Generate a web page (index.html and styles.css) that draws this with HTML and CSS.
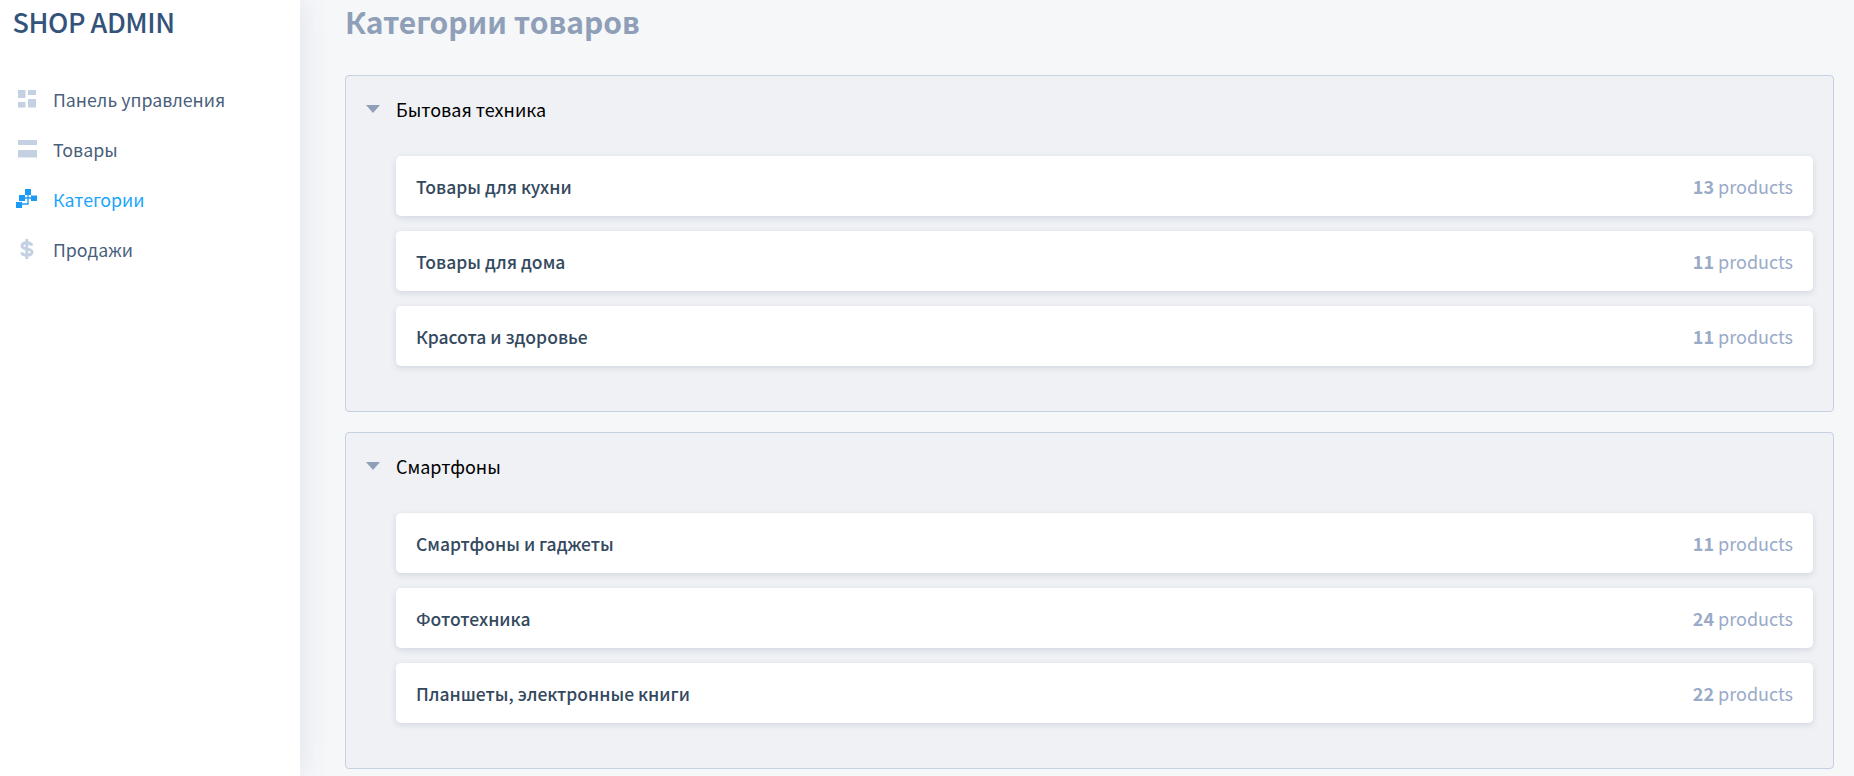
FILE: index.html
```html
<!DOCTYPE html>
<html lang="ru">
<head>
<meta charset="utf-8">
<title>Shop Admin</title>
<link rel="stylesheet" href="styles.css">
</head>
<body>
<div class="app">
  <aside class="sidebar">
    <div class="logo">SHOP ADMIN</div>
    <nav class="nav">
      <a class="nav-item">
        <svg class="nav-icon" viewBox="0 0 22 22"><path d="M2 2h7.500v8H2zM2 14h7.500v5.500H2zM12 2h8v5h-8zM12 11h8v8.500h-8z"/></svg>
        <span>Панель управления</span>
      </a>
      <a class="nav-item">
        <svg class="nav-icon" viewBox="0 0 22 22"><path d="M2 2h19v5H2zM2 12h19v7.500H2z"/></svg>
        <span>Товары</span>
      </a>
      <a class="nav-item active">
        <svg class="nav-icon" viewBox="0 0 22 22"><path d="M9 1h6v6H9zM3 7h6v6H3zM15 7.500h6V13h-6zM0 14h6v6H0z"/><path class="link" d="M9 10h6M12 7v9H6"/></svg>
        <span>Категории</span>
      </a>
      <a class="nav-item">
        <svg class="nav-icon" viewBox="0 0 22 22"><path class="dollar" d="M15.800 7.600C15.300 5.500 13.400 4.700 10.800 4.700 8 4.700 6 6 6 8c0 4.300 10 1.700 10 6.100 0 2-2.100 3.200-5.200 3.200-2.700 0-4.700-.9-5.200-3M10.800 1v20"/></svg>
        <span>Продажи</span>
      </a>
    </nav>
  </aside>
  <main class="main">
    <h1 class="title">Категории товаров</h1>
    <section class="group">
      <header class="group-head"><i class="caret"></i><span>Бытовая техника</span></header>
      <ul class="list">
        <li class="row"><span class="name">Товары для кухни</span><span class="count"><b>13</b> products</span></li>
        <li class="row"><span class="name">Товары для дома</span><span class="count"><b>11</b> products</span></li>
        <li class="row"><span class="name">Красота и здоровье</span><span class="count"><b>11</b> products</span></li>
      </ul>
    </section>
    <section class="group">
      <header class="group-head"><i class="caret"></i><span>Смартфоны</span></header>
      <ul class="list">
        <li class="row"><span class="name">Смартфоны и гаджеты</span><span class="count"><b>11</b> products</span></li>
        <li class="row"><span class="name">Фототехника</span><span class="count"><b>24</b> products</span></li>
        <li class="row"><span class="name">Планшеты, электронные книги</span><span class="count"><b>22</b> products</span></li>
      </ul>
    </section>
  </main>
</div>
</body>
</html>
```
FILE: styles.css
```css
* { box-sizing: border-box; }
html, body { margin: 0; height: 100%; overflow: hidden; }
body {
  font-family: "Noto Sans CJK SC", "Noto Sans", sans-serif;
  background: #f5f7f9;
  color: #34495e;
}
.app { display: flex; height: 776px; overflow: hidden; }
.sidebar {
  width: 300px;
  flex: none;
  background: #fff;
  box-shadow: 0 0 30px rgba(64, 80, 110, .12);
  padding: 4px 0 0 12.500px;
  position: relative;
}
.logo { font-size: 27px; line-height: 36px; font-weight: 500; color: #34537a; letter-spacing: -.45px; }
.nav { margin-top: 34px; display: flex; flex-direction: column; }
.nav-item { display: flex; align-items: center; height: 50px; gap: 15px; font-size: 17.800px; color: #4a5f7c; padding-left: 3.500px; }
.nav-item.active { color: #18a5fb; }
.nav-icon { width: 22px; height: 22px; fill: #c3d1e3; flex: none; }
.active .nav-icon { fill: #1a9bf5; }
.link { fill: none; stroke: #1a9bf5; stroke-width: 1.300; }
.dollar { fill: none; stroke: #c3d1e3; stroke-width: 3; }
.main { flex: 1; padding: 0 20px 0 45px; min-width: 0; }
.title { margin: 0 0 32px; font-size: 30px; line-height: 43px; font-weight: 700; color: #8f9fb8; }
.group {
  background: #eff1f5;
  border: 1px solid #c3d1e3;
  border-radius: 4px;
  height: 337px;
  margin-bottom: 20px;
  padding: 0 20px 0 50px;
  position: relative;
}
.group-head { display: flex; align-items: center; height: 65px; margin-bottom: 15px; font-size: 18px; color: #000; margin-left: -30px; gap: 16px; }
.caret { width: 0; height: 0; border: 7.500px solid transparent; border-top: 8px solid #8f9fb8; border-bottom: 0; flex: none; }
.list { list-style: none; margin: 0; padding: 0; display: flex; flex-direction: column; gap: 15px; }
.row {
  height: 60px;
  background: #fff;
  border-radius: 5px;
  box-shadow: 0 2px 6px rgba(60, 80, 110, .16);
  display: flex;
  align-items: center;
  justify-content: space-between;
  padding: 0 20px;
}
.name { font-size: 17.500px; font-weight: 500; color: #34495e; }
.count { font-size: 18px; color: #9aabc8; }
.count b { font-weight: 700; }
```
